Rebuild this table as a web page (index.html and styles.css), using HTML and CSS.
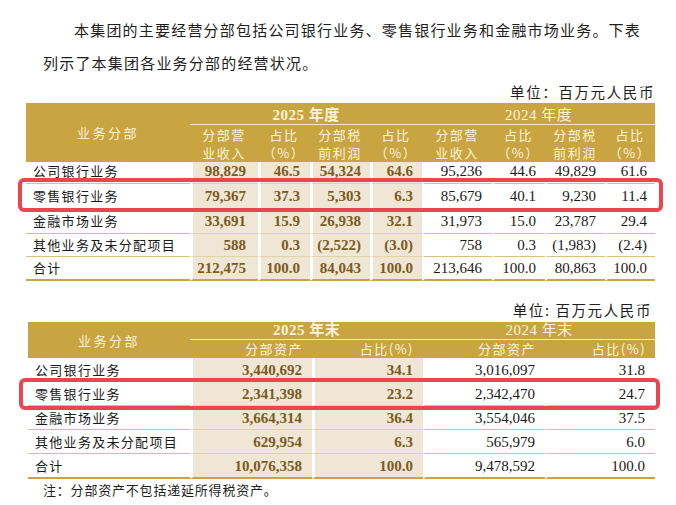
FILE: index.html
```html
<!DOCTYPE html>
<html lang="zh-CN">
<head>
<meta charset="utf-8">
<title>业务分部</title>
<link rel="stylesheet" href="styles.css">
</head>
<body>
<div class="page">
  <p class="intro">本集团的主要经营分部包括公司银行业务、零售银行业务和金融市场业务。下表列示了本集团各业务分部的经营状况。</p>
  <div class="unit">单位：百万元人民币</div>
  <div class="tbl-wrap">
    <table class="seg seg1">
      <colgroup>
        <col class="w-lbl1">
        <col class="w68"><col class="w52"><col class="w60"><col class="w52">
        <col class="w70"><col class="w53"><col class="w60"><col class="w50">
      </colgroup>
      <thead>
        <tr>
          <th rowspan="2" class="lbl-h">业务分部</th>
          <th colspan="4" class="y cur">2025 年度</th>
          <th colspan="4" class="y">2024 年度</th>
        </tr>
        <tr class="sub">
          <th>分部营<br>业收入</th>
          <th>占比<br>（%）</th>
          <th>分部税<br>前利润</th>
          <th>占比<br>（%）</th>
          <th>分部营<br>业收入</th>
          <th>占比<br>（%）</th>
          <th>分部税<br>前利润</th>
          <th>占比<br>（%）</th>
        </tr>
      </thead>
      <tbody>
        <tr class="r-short">
          <td class="lbl">公司银行业务</td>
          <td class="b p1">98,829</td><td class="b p2">46.5</td><td class="b">54,324</td><td class="b">64.6</td>
          <td class="p5">95,236</td><td>44.6</td><td>49,829</td><td class="p8">61.6</td>
        </tr>
        <tr class="r-tall">
          <td class="lbl">零售银行业务</td>
          <td class="b p1">79,367</td><td class="b p2">37.3</td><td class="b">5,303</td><td class="b">6.3</td>
          <td class="p5">85,679</td><td>40.1</td><td>9,230</td><td class="p8">11.4</td>
        </tr>
        <tr class="r-tall">
          <td class="lbl">金融市场业务</td>
          <td class="b p1">33,691</td><td class="b p2">15.9</td><td class="b">26,938</td><td class="b">32.1</td>
          <td class="p5">31,973</td><td>15.0</td><td>23,787</td><td class="p8">29.4</td>
        </tr>
        <tr>
          <td class="lbl">其他业务及未分配项目</td>
          <td class="b p1">588</td><td class="b p2">0.3</td><td class="b">(2,522)</td><td class="b">(3.0)</td>
          <td class="p5">758</td><td>0.3</td><td>(1,983)</td><td class="p8">(2.4)</td>
        </tr>
        <tr class="total">
          <td class="lbl">合计</td>
          <td class="b p1">212,475</td><td class="b p2">100.0</td><td class="b">84,043</td><td class="b">100.0</td>
          <td class="p5">213,646</td><td>100.0</td><td>80,863</td><td class="p8">100.0</td>
        </tr>
      </tbody>
    </table>
    <div class="hl hl1"></div>
  </div>

  <div class="unit unit2">单位: 百万元人民币</div>
  <div class="tbl-wrap wrap2">
    <table class="seg seg2">
      <colgroup>
        <col class="w-lbl2">
        <col class="w122"><col class="w111"><col class="w122"><col class="w110">
      </colgroup>
      <thead>
        <tr>
          <th rowspan="2" class="lbl-h">业务分部</th>
          <th colspan="2" class="y cur">2025 年末</th>
          <th colspan="2" class="y">2024 年末</th>
        </tr>
        <tr class="sub">
          <th>分部资产</th>
          <th>占比(%)</th>
          <th>分部资产</th>
          <th>占比(%)</th>
        </tr>
      </thead>
      <tbody>
        <tr>
          <td class="lbl">公司银行业务</td>
          <td class="b">3,440,692</td><td class="b">34.1</td>
          <td>3,016,097</td><td>31.8</td>
        </tr>
        <tr>
          <td class="lbl">零售银行业务</td>
          <td class="b">2,341,398</td><td class="b">23.2</td>
          <td>2,342,470</td><td>24.7</td>
        </tr>
        <tr>
          <td class="lbl">金融市场业务</td>
          <td class="b">3,664,314</td><td class="b">36.4</td>
          <td>3,554,046</td><td>37.5</td>
        </tr>
        <tr>
          <td class="lbl">其他业务及未分配项目</td>
          <td class="b">629,954</td><td class="b">6.3</td>
          <td>565,979</td><td>6.0</td>
        </tr>
        <tr class="total">
          <td class="lbl">合计</td>
          <td class="b">10,076,358</td><td class="b">100.0</td>
          <td>9,478,592</td><td>100.0</td>
        </tr>
      </tbody>
    </table>
    <div class="hl hl2"></div>
  </div>
  <p class="note">注：分部资产不包括递延所得税资产。</p>
</div>
</body>
</html>
```

FILE: styles.css
```css
body {
  margin: 0;
  background: #ffffff;
  font-family: "Noto Sans CJK SC", sans-serif;
  color: #1e1e1e;
}

.page {
  width: 629px;
  padding: 13px 0 0 26px;
}

.intro {
  margin: 0 0 0 17px;
  width: 612px;
  font-size: 15px;
  letter-spacing: 1.2px;
  line-height: 33px;
  text-indent: 31px;
}

.unit {
  text-align: right;
  font-size: 14.5px;
  letter-spacing: 1.6px;
  line-height: 20px;
  margin-top: 3px;
  margin-bottom: 1px;
}

.unit2 {
  margin-top: 19px;
  margin-bottom: 2px;
  padding-right: 3px;
}

.tbl-wrap {
  position: relative;
}

.wrap2 {
  margin-left: 2px;
  width: 627px;
}

.seg {
  border-collapse: separate;
  border-spacing: 0;
  table-layout: fixed;
  width: 629px;
}

.seg2 {
  width: 627px;
}

.w-lbl1 { width: 164px; }
.w-lbl2 { width: 162px; }
.w68 { width: 68px; }
.w52 { width: 52px; }
.w60 { width: 60px; }
.w70 { width: 70px; }
.w53 { width: 53px; }
.w50 { width: 50px; }
.w122 { width: 122px; }
.w111 { width: 111px; }
.w110 { width: 110px; }

.seg th {
  background: #c9a541;
  color: #fbf1d9;
  font-weight: 400;
  font-size: 13px;
  letter-spacing: 1.5px;
  padding: 0;
  text-align: center;
}

.seg th.lbl-h {
  letter-spacing: 2.5px;
}

.seg th.y {
  height: 18px;
  border-bottom: 1px solid #f4e8c8;
  font-family: "Liberation Serif", "Noto Sans CJK SC", serif;
  font-size: 15px;
  letter-spacing: 0.5px;
}

.seg th.cur {
  font-weight: 700;
}

.seg1 .sub th {
  height: 37px;
  line-height: 18px;
}

.seg2 th.y {
  height: 17px;
  line-height: 17px;
}

.seg2 .sub th {
  height: 18px;
  line-height: 18px;
  text-align: right;
  padding-right: 9px;
  letter-spacing: 1.5px;
}

.seg td {
  height: 22px;
  padding: 0 9px 0 0;
  border-bottom: 1px solid #d8c185;
  border-left: 3px solid #ffffff;
  text-align: right;
  font-family: "Liberation Serif", serif;
  font-size: 15px;
  line-height: 18px;
  color: #1a1a1a;
  white-space: nowrap;
}

.seg1 tr.r-short td {
  height: 17px;
  padding-bottom: 3px;
}

.seg1 tr.r-tall td {
  height: 24px;
}

.seg2 td {
  height: 23px;
  padding-right: 10px;
}

.seg td.lbl {
  border-left: 0;
  text-align: left;
  padding-left: 7px;
  font-family: "Noto Sans CJK SC", sans-serif;
  font-size: 13px;
  letter-spacing: 1.3px;
}

.seg td.b {
  background: #efe6d5;
  color: #7a5b1d;
  font-weight: 700;
  border-bottom-color: #e2d2aa;
}

.seg td.p1 { padding-right: 12px; }
.seg td.p2 { padding-right: 10px; }
.seg td.p5 { padding-right: 10px; }
.seg td.p8 { padding-right: 8px; }

.seg tr.total td {
  border-bottom: 2px solid #c9a541;
}

.hl {
  position: absolute;
  border: 4px solid #e9464f;
  border-radius: 6px;
}

.hl1 {
  left: -8px;
  right: -8px;
  top: 75px;
  height: 26px;
}

.hl2 {
  left: -9px;
  right: -5px;
  top: 56px;
  height: 24px;
}

.note {
  margin: 2px 0 0 17px;
  font-size: 13px;
  letter-spacing: 0.8px;
  line-height: 18px;
}
```
